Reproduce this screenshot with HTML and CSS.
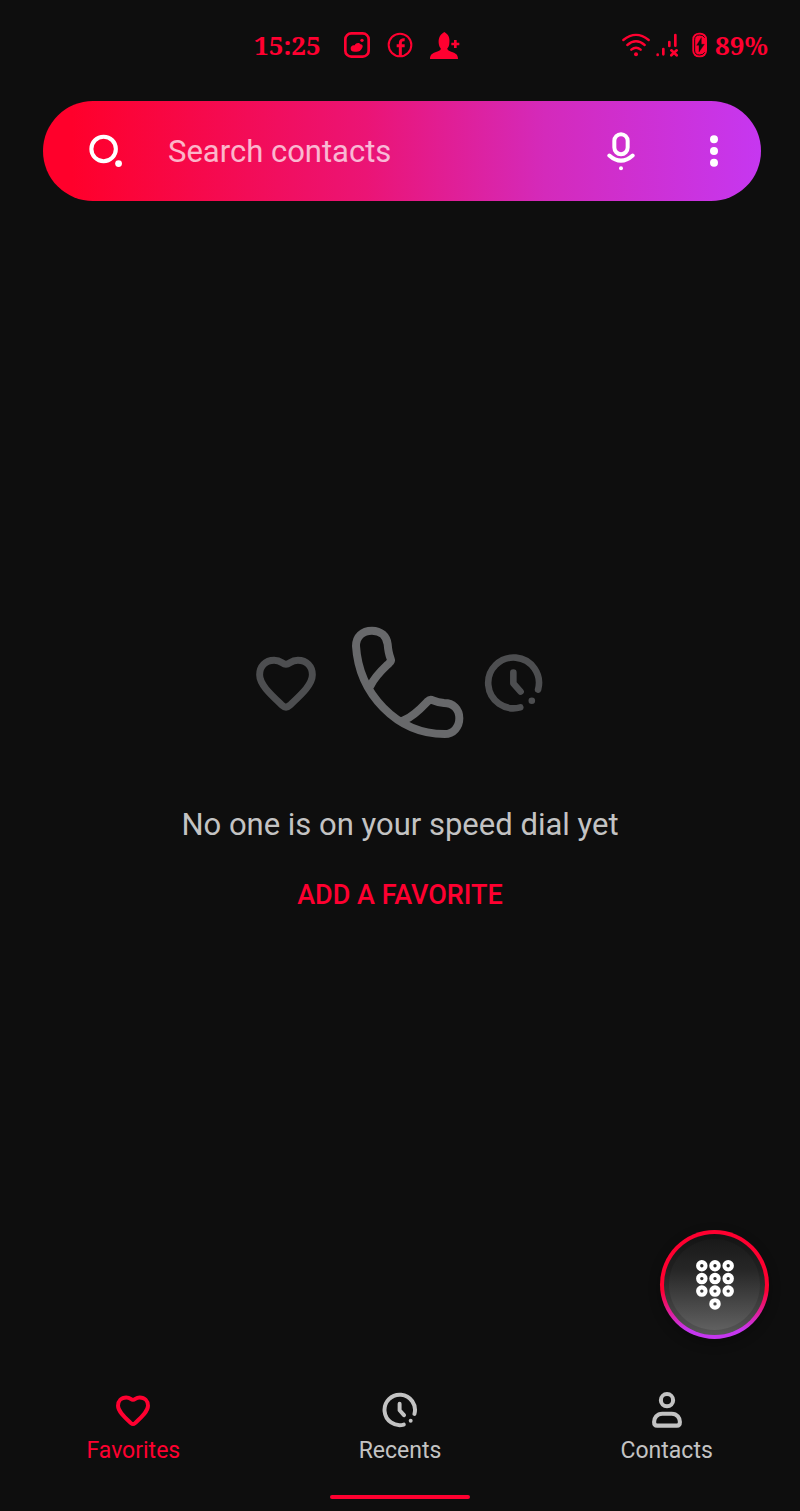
FILE: index.html
```html
<!DOCTYPE html>
<html lang="en">
<head>
<meta charset="utf-8">
<meta name="viewport" content="width=device-width, initial-scale=1">
<title>Phone</title>
<link rel="stylesheet" href="styles.css">
</head>
<body>
<div class="app">
  <header class="status">
    <div class="status-group">
      <time class="status-time">15:25</time>
      <svg class="status-app" viewBox="0 0 78 78"><rect x="4" y="4" width="70" height="70" rx="18" fill="none" stroke="currentColor" stroke-width="8"/><path d="M20 50C19 42 27 38 32 40C36 31 47 32 49 37C56 37 58 44 54 49C50 58 42 61 32 59C24 59 20 56 20 50Z" fill="currentColor"/><circle cx="54" cy="25" r="5" fill="currentColor"/></svg>
      <svg class="status-app" viewBox="0 0 78 78"><circle cx="39" cy="39" r="34" fill="none" stroke="currentColor" stroke-width="6"/><path d="M40 73V33Q40 22 53 23M29 41H53" fill="none" stroke="currentColor" stroke-width="9"/></svg>
      <svg class="status-person" viewBox="0 0 90 84"><path d="M0 84C0 71 7 67 18 63C31 59 33 57 32 52C28 48 27 43 26 36C25 20 31 10 43 3C55 10 60 20 58 36C58 43 55 49 52 52C52 57 54 59 66 63C77 67 84 71 84 84Z" fill="currentColor"/><path d="M76 27V51M64 39H88" stroke="currentColor" stroke-width="8"/></svg>
    </div>
    <div class="status-group status-system">
      <svg class="wifi" viewBox="0 0 84 72" fill="none" stroke="currentColor" stroke-width="7" stroke-linecap="round"><path d="M4 21Q42-10 80 21M16 36Q42 14 68 36M28 50Q42 38 56 50"/><circle cx="42" cy="64" r="6" fill="currentColor" stroke="none"/></svg>
      <svg class="signal" viewBox="0 0 72 72" fill="none" stroke="currentColor" stroke-width="8" stroke-linecap="round"><path d="M8 65V66M25 48V64M43 27V39M61 6V38M49 52L65 67M65 52L49 67"/></svg>
      <svg class="battery" viewBox="0 0 48 78"><rect x="1" y="2" width="44" height="74" rx="20" fill="currentColor"/><g class="battery-cut"><path d="M8 57V23Q8 9 23 9Q34 9 38 17M8 57Q9 69 23 69Q34 69 38 61" fill="none" stroke-width="3"/><path d="M28 17L14 40H21V60L37 37H28Z"/></g></svg>
      <span class="status-level">89%</span>
    </div>
  </header>

  <form class="search" role="search">
    <button class="icon-button" type="button" aria-label="Search"><svg class="icon-search" viewBox="0 0 100 100"><circle cx="43" cy="44" r="36" fill="none" stroke="currentColor" stroke-width="12"/><circle cx="87" cy="87" r="10" fill="currentColor"/></svg></button>
    <input class="search-input" type="text" placeholder="Search contacts" aria-label="Search contacts">
    <button class="icon-button" type="button" aria-label="Voice search"><svg class="icon-mic" viewBox="0 0 84 116" fill="none" stroke="currentColor" stroke-width="12" stroke-linecap="round"><rect x="22" y="6" width="40" height="60" rx="20"/><path d="M7 70Q42 101 77 70"/><circle cx="42" cy="108" r="6" fill="currentColor" stroke="none"/></svg></button>
    <button class="icon-button icon-button-more" type="button" aria-label="More options"><svg class="icon-more" viewBox="0 0 24 96" fill="currentColor"><circle cx="12" cy="13" r="12"/><circle cx="12" cy="48" r="12"/><circle cx="12" cy="83" r="12"/></svg></button>
  </form>

  <main class="empty">
    <div class="art">
      <svg class="art-side" viewBox="50 129 182 182" fill="none" stroke="currentColor" stroke-width="21" stroke-linejoin="round"><path d="M141 163C128 163 128 151 105 151C78 151 61 170 61 195C61 225 95 255 130 288Q141 298 152 288C187 255 221 225 221 195C221 170 204 151 177 151C154 151 154 163 141 163Z"/></svg>
      <svg class="art-phone" viewBox="336 48 339 339" fill="none" stroke="currentColor" stroke-width="24" stroke-linejoin="round" stroke-linecap="round"><path d="M351 108C351 80 370 62 399 62C425 62 443 78 446 103C448 127 450 134 455 146Q458 153 450 160C431 178 409 197 394 228M351 108C360 250 472 372 617 372C644 372 661 350 661 325C661 298 643 279 615 279C603 278 596 277 582 271Q573 267 566 274C548 293 524 319 496 330"/></svg>
      <svg class="art-side" viewBox="731 129 182 182" fill="none" stroke="currentColor" stroke-width="20" stroke-linecap="round" stroke-linejoin="round"><path d="M895 240A77 77 0 1 0 841 294M820 188V221L842 246"/><circle cx="876" cy="274" r="10" fill="currentColor" stroke="none"/></svg>
    </div>
    <p class="empty-text">No one is on your speed dial yet</p>
    <button class="empty-action" type="button">ADD A FAVORITE</button>
  </main>

  <button class="fab" type="button" aria-label="Open dial pad">
    <span class="fab-face">
      <svg class="icon-dial" viewBox="0 0 112 148" fill="none" stroke="currentColor" stroke-width="12"><circle cx="17" cy="17" r="11"/><circle cx="56" cy="17" r="11"/><circle cx="95" cy="17" r="11"/><circle cx="17" cy="55" r="11"/><circle cx="56" cy="55" r="11"/><circle cx="95" cy="55" r="11"/><circle cx="17" cy="92" r="11"/><circle cx="56" cy="92" r="11"/><circle cx="95" cy="92" r="11"/><circle cx="56" cy="130" r="11"/></svg>
    </span>
  </button>

  <nav class="tabs">
    <a class="tab tab-active" href="#favorites" aria-current="page">
      <svg class="tab-icon" viewBox="45 122 192 192" fill="none" stroke="currentColor" stroke-width="21" stroke-linejoin="round"><path d="M141 163C128 163 128 151 105 151C78 151 61 170 61 195C61 225 95 255 130 288Q141 298 152 288C187 255 221 225 221 195C221 170 204 151 177 151C154 151 154 163 141 163Z"/></svg>
      <span>Favorites</span>
    </a>
    <a class="tab" href="#recents">
      <svg class="tab-icon" viewBox="731 129 182 182" fill="none" stroke="currentColor" stroke-width="20" stroke-linecap="round" stroke-linejoin="round"><path d="M895 240A77 77 0 1 0 841 294M820 188V221L842 246"/><circle cx="876" cy="274" r="10" fill="currentColor" stroke="none"/></svg>
      <span>Recents</span>
    </a>
    <a class="tab" href="#contacts">
      <svg class="tab-icon" viewBox="0 0 106 106" fill="none" stroke="currentColor" stroke-width="12"><circle cx="53" cy="24" r="18"/><path d="M39 64H67C83 64 91 77 91 88Q91 99 82 99H24Q15 99 15 88C15 77 23 64 39 64Z"/></svg>
      <span>Contacts</span>
    </a>
  </nav>
  <div class="home-bar"></div>
</div>
</body>
</html>
```
FILE: styles.css
```css
:root {
  --bg: #0e0e0e;
  --accent: #ff0030;
  --violet: #c637f0;
  --text: #c3c3c3;
}

* { box-sizing: border-box; }

body {
  margin: 0;
  background: var(--bg);
  color: var(--text);
  font-family: Roboto, sans-serif;
}

svg { display: block; flex: none; }

button {
  border: 0;
  padding: 0;
  background: none;
  color: inherit;
  font: inherit;
  cursor: pointer;
}

.app {
  position: relative;
  display: flex;
  flex-direction: column;
  min-height: 100vh;
}

.status {
  display: flex;
  align-items: center;
  justify-content: space-between;
  height: 90px;
  padding: 0 32px 0 254px;
  color: var(--accent);
  font: bold 26px/32px "Noto Serif", "Liberation Serif", serif;
}

.status-group { display: flex; align-items: center; gap: 17px; }
.status-time { margin-right: 6px; }
.status-app { width: 26px; height: 26px; }
.status-person { width: 30px; height: 28px; }
.status-system { gap: 5px; }
.wifi { width: 28px; height: 24px; }
.signal { width: 24px; height: 24px; margin-right: 8px; }
.battery { width: 16px; height: 26px; margin-right: 2px; }
.battery-cut { fill: var(--bg); stroke: var(--bg); }

.search {
  display: flex;
  align-items: center;
  height: 100px;
  margin: 11px 39px 0 43px;
  padding: 0 15px 0 31px;
  border-radius: 50px;
  background: linear-gradient(90deg, #ff002b 4%, #eb1475 45%, #d42abb 70%, var(--violet) 100%);
  color: #fff;
}

.icon-button {
  display: flex;
  align-items: center;
  justify-content: center;
  width: 64px;
  height: 64px;
}
.icon-button-more { margin-left: 29px; }
.icon-search { width: 34px; height: 34px; }
.icon-mic { width: 28px; height: 39px; }
.icon-more { width: 8px; height: 32px; }

.search-input {
  flex: 1;
  min-width: 0;
  height: 64px;
  margin-left: 30px;
  padding: 0;
  border: 0;
  outline: 0;
  background: none;
  color: #fff;
  font: 31px/40px Roboto, sans-serif;
}
.search-input::placeholder { color: #fff; opacity: 0.7; }

.empty {
  flex: 1;
  display: flex;
  flex-direction: column;
  align-items: center;
  justify-content: center;
  padding-bottom: 40px;
}

.art { display: flex; align-items: center; gap: 20px; }
.art-side { width: 60px; height: 60px; color: #4d4e50; }
.art-phone { width: 113px; height: 113px; margin-left: 15px; color: #68696b; }

.empty-text { margin: 66px 0 0; font-size: 31px; line-height: 40px; }

.empty-action {
  height: 64px;
  margin-top: 18px;
  padding: 0 24px;
  color: var(--accent);
  font-size: 27px;
  font-weight: 500;
}

.fab {
  position: absolute;
  right: 31px;
  bottom: 172px;
  width: 109px;
  height: 109px;
  padding: 4px;
  border-radius: 50%;
  background: linear-gradient(var(--accent) 55%, var(--violet) 92%);
  box-shadow: 0 4px 12px rgba(0, 0, 0, 0.3);
}
.fab-face {
  display: flex;
  align-items: center;
  justify-content: center;
  height: 100%;
  border: 5px solid rgba(0, 0, 0, 0.14);
  border-radius: 50%;
  background: linear-gradient(#171717, #262626 35%, #656565) border-box;
  color: #fff;
}
.icon-dial { width: 38px; height: 50px; }

.tabs { display: grid; grid-template-columns: repeat(3, 1fr); }
.tab {
  display: flex;
  flex-direction: column;
  align-items: center;
  gap: 9px;
  color: var(--text);
  font-size: 23px;
  line-height: 28px;
  text-decoration: none;
}
.tab-active { color: var(--accent); }
.tab-icon { width: 36px; height: 36px; }

.home-bar {
  width: 140px;
  height: 4px;
  margin: 30px auto 12px;
  border-radius: 2px;
  background: var(--accent);
}
```
